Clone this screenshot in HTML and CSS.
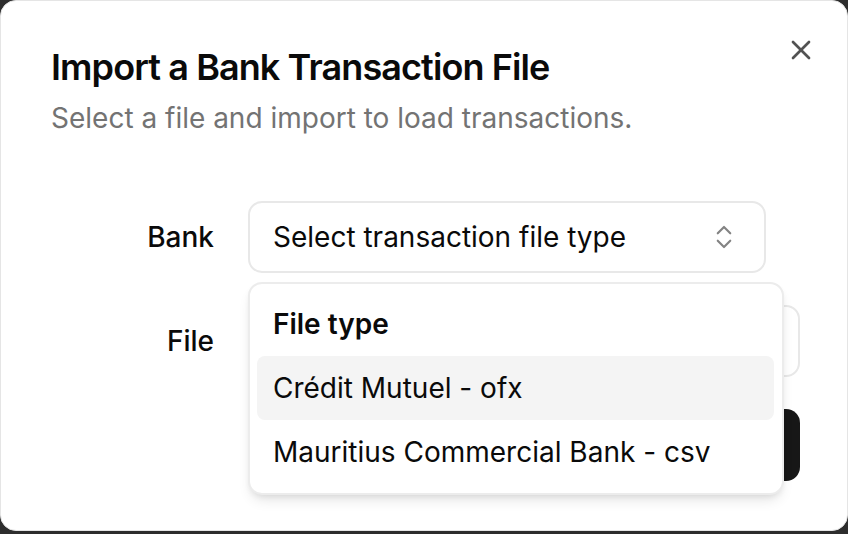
FILE: index.html
```html
<!DOCTYPE html>
<html lang="en">
<head>
<meta charset="utf-8">
<title>Import a Bank Transaction File</title>
<link rel="stylesheet" href="styles.css">
</head>
<body>
<div class="backdrop">
  <div class="dialog">
    <button class="close" aria-label="Close">
      <svg viewBox="0 0 24 24" width="32" height="32" fill="none" stroke="currentColor" stroke-width="2" stroke-linecap="round" stroke-linejoin="round"><path d="M18 6 6 18"/><path d="m6 6 12 12"/></svg>
    </button>
    <div class="header">
      <h2 class="title">Import a Bank Transaction File</h2>
      <p class="desc">Select a file and import to load transactions.</p>
    </div>
    <div class="form">
      <div class="row">
        <label class="label">Bank</label>
        <div class="select-wrap">
          <button class="trigger">
            <span>Select transaction file type</span>
            <svg class="chev" viewBox="0 0 24 24" width="30" height="30" fill="none" stroke="currentColor" stroke-width="1.7" stroke-linecap="round" stroke-linejoin="round"><path d="m7 15 5 5 5-5"/><path d="m7 9 5-5 5 5"/></svg>
          </button>
          <div class="popover">
            <div class="group-label">File type</div>
            <div class="item active">Crédit Mutuel - ofx</div>
            <div class="item">Mauritius Commercial Bank - csv</div>
          </div>
        </div>
      </div>
      <div class="row">
        <label class="label">File</label>
        <div class="file-input" aria-label="File"></div>
      </div>
    </div>
    <div class="footer">
      <button class="primary" aria-label="Import"></button>
    </div>
  </div>
</div>
</body>
</html>
```
FILE: styles.css
```css
* { box-sizing: border-box; }
html, body { margin: 0; padding: 0; }
body {
  background: #2d2d2d;
  font-family: Inter, "Noto Sans", sans-serif;
  color: #0a0a0a;
  width: 848px;
  height: 534px;
  overflow: hidden;
}
.backdrop {
  padding: 0 0 3px 0;
}
.dialog {
  position: relative;
  height: 531px;
  background: #fff;
  border: 1px solid #e5e5e5;
  border-radius: 16px;
  padding: 48px 47px 48px 50px;
  display: flex;
  flex-direction: column;
}
.close {
  position: absolute;
  top: 33px;
  right: 30px;
  width: 32px;
  height: 32px;
  padding: 0;
  border: 0;
  background: none;
  color: #0a0a0a;
  opacity: 0.7;
  display: flex;
}
.header {
  display: flex;
  flex-direction: column;
  gap: 13px;
}
.title {
  margin: 0;
  font-size: 36px;
  line-height: 36px;
  font-weight: 600;
  letter-spacing: -0.9px;
}
.desc {
  margin: 0;
  font-size: 28px;
  line-height: 40px;
  color: #737373;
}
.form {
  display: flex;
  flex-direction: column;
  gap: 32px;
  padding: 63px 0 0 0;
}
.row {
  display: grid;
  grid-template-columns: 163px 1fr;
  column-gap: 34px;
  align-items: center;
}
.label {
  text-align: right;
  font-size: 28px;
  line-height: 28px;
  font-weight: 500;
}
.select-wrap {
  position: relative;
}
.trigger {
  width: 518px;
  height: 72px;
  border: 2px solid #e8e8e8;
  border-radius: 14px;
  background: #fff;
  display: flex;
  align-items: center;
  justify-content: space-between;
  padding: 0 25px 0 23px;
  font-family: inherit;
  font-size: 28px;
  color: #0a0a0a;
}
.chev {
  color: #0a0a0a;
  opacity: 0.5;
}
.popover {
  position: absolute;
  top: 81px;
  left: 0;
  width: 536px;
  background: #fff;
  border: 2px solid #ececec;
  border-radius: 14px;
  padding: 8px 8px 9px 7px;
  box-shadow: 0 8px 14px -4px rgba(0,0,0,0.12), 0 3px 6px -2px rgba(0,0,0,0.08);
  z-index: 5;
}
.group-label {
  padding: 12px 16px;
  font-size: 28px;
  line-height: 40px;
  font-weight: 600;
}
.item {
  padding: 12px 16px;
  font-size: 28px;
  line-height: 40px;
  border-radius: 8px;
}
.item.active {
  background: #f4f4f4;
}
.file-input {
  height: 72px;
  border: 2px solid #e8e8e8;
  border-radius: 14px;
}
.footer {
  display: flex;
  justify-content: flex-end;
  margin-top: 32px;
}
.primary {
  width: 180px;
  height: 72px;
  background: #171717;
  border: 0;
  border-radius: 14px;
}
```
